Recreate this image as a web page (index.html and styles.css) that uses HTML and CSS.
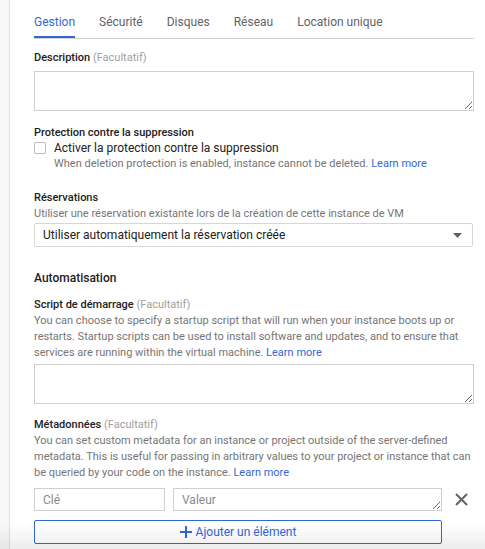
FILE: index.html
```html
<!DOCTYPE html>
<html lang="fr">
<head>
<meta charset="utf-8">
<title>Gestion</title>
<link rel="stylesheet" href="styles.css">
</head>
<body>
<div class="panel">
  <nav class="tabs">
    <span class="tab active">Gestion</span>
    <span class="tab">Sécurité</span>
    <span class="tab">Disques</span>
    <span class="tab">Réseau</span>
    <span class="tab">Location unique</span>
  </nav>

  <div class="label desc-label">Description <span class="opt">(Facultatif)</span></div>
  <textarea class="area"></textarea>

  <div class="label prot-label">Protection contre la suppression</div>
  <label class="check-row"><span class="box"></span><span>Activer la protection contre la suppression</span></label>
  <div class="helper">When deletion protection is enabled, instance cannot be deleted. <a class="link">Learn more</a></div>

  <div class="label res-label">Réservations</div>
  <div class="sub">Utiliser une réservation existante lors de la création de cette instance de VM</div>
  <div class="select"><span>Utiliser automatiquement la réservation créée</span><svg class="caret" width="9" height="5" viewBox="0 0 9 5"><path d="M0 0h9L4.5 5z" fill="#616161"/></svg></div>

  <div class="section-title">Automatisation</div>

  <div class="label script-label">Script de démarrage <span class="opt">(Facultatif)</span></div>
  <p class="para">You can choose to specify a startup script that will run when your instance boots up or restarts. Startup scripts can be used to install software and updates, and to ensure that services are running within the virtual machine. <a class="link">Learn more</a></p>
  <textarea class="area script-area"></textarea>

  <div class="label meta-label">Métadonnées <span class="opt">(Facultatif)</span></div>
  <p class="para">You can set custom metadata for an instance or project outside of the server-defined metadata. This is useful for passing in arbitrary values to your project or instance that can be queried by your code on the instance. <a class="link">Learn more</a></p>
  <div class="kv">
    <input class="key" placeholder="Clé">
    <textarea class="val" placeholder="Valeur"></textarea>
    <svg class="close" width="13" height="13" viewBox="0 0 13 13"><path d="M1 1L12 12M12 1L1 12" stroke="#5f6368" stroke-width="2"/></svg>
  </div>
  <button class="add"><svg width="12" height="12" viewBox="0 0 12 12"><path d="M6 0V12M0 6H12" stroke="#3367d6" stroke-width="2"/></svg><span>Ajouter un élément</span></button>
</div>
</body>
</html>
```

FILE: styles.css
```css
html, body {
  margin: 0;
  padding: 0;
}
body {
  background: #f8f8f8;
  font-family: Roboto, "Liberation Sans", Arial, sans-serif;
  color: #212121;
  width: 485px;
  height: 549px;
  overflow: hidden;
}
body::after {
  content: "";
  position: fixed;
  left: 0;
  right: 0;
  bottom: 0;
  height: 26px;
  background: linear-gradient(to bottom, rgba(0,0,0,0), rgba(0,0,0,0.07));
  pointer-events: none;
}
.panel {
  margin-left: 9px;
  border-left: 1px solid #e0e0e0;
  background: #fff;
  padding: 0 11px 0 24px;
  height: 549px;
  box-sizing: border-box;
  display: flex;
  flex-direction: column;
  align-items: flex-start;
}
.tabs {
  display: flex;
  gap: 24px;
  width: 440px;
  border-bottom: 1px solid #d0d0d0;
  height: 38px;
  flex: none;
}
.tab {
  font-size: 12px;
  line-height: 16px;
  padding-top: 14px;
  color: #5f6368;
  box-sizing: border-box;
  height: 38px;
}
.tab.active {
  color: #3367d6;
  border-bottom: 2px solid #3367d6;
}
.label {
  font-size: 11px;
  font-weight: 500;
  line-height: 16px;
  color: #212121;
}
.opt {
  font-weight: 400;
  color: #9e9e9e;
}
.desc-label { margin-top: 11px; }
.area {
  display: block;
  flex: none;
  width: 440px;
  height: 40px;
  box-sizing: border-box;
  border: 1px solid #cfcfcf;
  margin: 5px 0 0;
  padding: 4px 8px;
  font: inherit;
  outline: none;
  resize: vertical;
}
.prot-label { margin-top: 15px; line-height: 14px; }
.check-row {
  display: flex;
  align-items: center;
  gap: 8px;
  font-size: 12px;
  line-height: 16px;
  color: #212121;
}
.box {
  width: 12px;
  height: 12px;
  box-sizing: border-box;
  border: 1px solid #bdbdbd;
  border-radius: 1px;
}
.helper {
  margin-left: 20px;
  font-size: 11px;
  line-height: 16px;
  color: #757575;
}
.link {
  color: #3367d6;
  text-decoration: none;
}
.res-label { margin-top: 18px; }
.sub {
  font-size: 11px;
  line-height: 15px;
  color: #757575;
}
.select {
  margin-top: 2px;
  width: 439px;
  height: 24px;
  flex: none;
  box-sizing: border-box;
  border: 1px solid #d6d6d6;
  border-radius: 2px;
  display: flex;
  align-items: center;
  justify-content: space-between;
  padding: 0 10px 0 8px;
  font-size: 12px;
  color: #212121;
}
.section-title {
  margin-top: 23px;
  font-size: 12px;
  font-weight: 500;
  line-height: 16px;
}
.script-label { margin-top: 11px; }
.para {
  margin: 0;
  width: 440px;
  font-size: 11px;
  line-height: 16px;
  color: #757575;
}
.script-area { margin-top: 3px; }
.meta-label { margin-top: 13px; }
.kv {
  margin-top: 7px;
  display: flex;
  align-items: center;
  gap: 8px;
  flex: none;
}
.key, .val {
  height: 23px;
  box-sizing: border-box;
  border: 1px solid #cfcfcf;
  font: inherit;
  font-size: 12px;
  padding: 0 8px;
  outline: none;
  margin: 0;
}
.key { width: 131px; }
.val {
  width: 269px;
  padding-top: 4px;
  resize: vertical;
  overflow: hidden;
  display: block;
}
.key::placeholder, .val::placeholder { color: #8a8a8a; }
.close { margin-left: 5px; }
.add {
  margin-top: 9px;
  flex: none;
  width: 408px;
  height: 24px;
  box-sizing: border-box;
  border: 1px solid #3367d6;
  border-radius: 2px;
  background: #fff;
  display: flex;
  align-items: center;
  justify-content: center;
  gap: 4px;
  font-family: inherit;
  font-size: 12px;
  color: #3367d6;
  padding: 0;
}
```
